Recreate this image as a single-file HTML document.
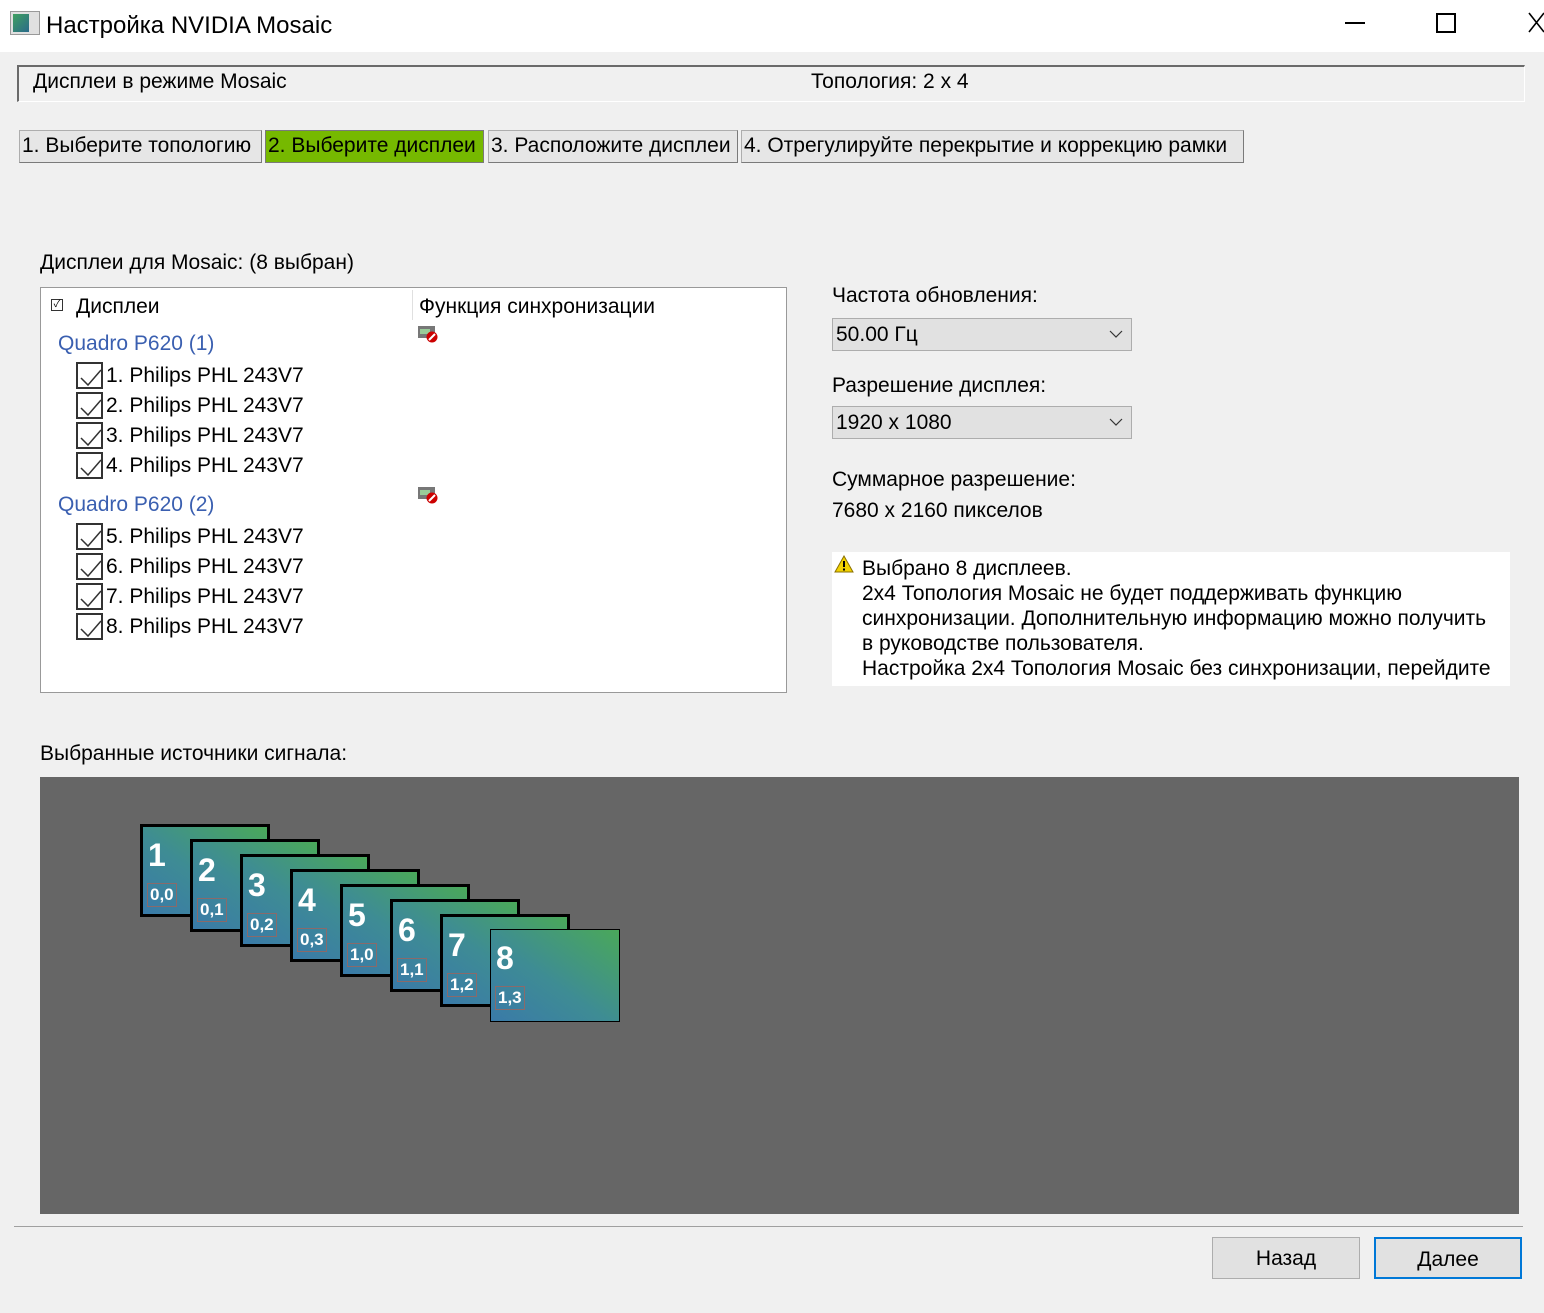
<!DOCTYPE html>
<html><head><meta charset="utf-8"><style>
*{margin:0;padding:0;box-sizing:border-box}
body{width:1544px;height:1313px;background:#f0f0f0;font-family:"Liberation Sans","Noto Sans CJK SC",sans-serif;font-size:21px;color:#000;position:relative;overflow:hidden}
.a{position:absolute;white-space:nowrap}
.tab{position:absolute;top:130px;height:33px;border:1px solid #adadad;border-bottom-color:#7a7a7a;border-right-color:#7a7a7a;background:#e6e6e6;padding:3px 0 0 2px;white-space:nowrap}
.cb{position:absolute;width:27px;height:27px;border:2px solid #333;background:#fff}
.cb svg{position:absolute;left:2px;top:3px}
.tile{position:absolute;width:130px;height:93px;border:3px solid #000;background:linear-gradient(35deg,#3a7aa8 0%,#3e8c94 45%,#4aa85a 100%);color:#fff;font-weight:bold}
.tile .n{position:absolute;left:5px;top:10px;font-size:32px}
.tile .c{position:absolute;left:4px;top:56px;font-size:17px;border:1px solid #8a6a6a;padding:1px 2px}
.sel{position:absolute;left:832px;width:300px;height:33px;background:#e1e1e1;border:1px solid #adadad;padding:4px 0 0 3px}
.sel svg{position:absolute;right:8px;top:11px}
.btn{position:absolute;top:1237px;width:148px;height:42px;background:#e1e1e1;border:1px solid #adadad;text-align:center;padding-top:9px}
</style></head><body>
<div class="a" style="left:0;top:0;width:1544px;height:52px;background:#fff"></div>
<div class="a" style="left:10px;top:11px;width:30px;height:24px;background:#e0e0e0;border:1px solid #999"><div style="position:absolute;left:2px;top:2px;width:16px;height:18px;background:linear-gradient(135deg,#3fa060,#2a6a8a)"></div></div>
<div class="a" style="left:46px;top:12px;font-size:24px">Настройка NVIDIA Mosaic</div>
<div class="a" style="left:1345px;top:22px;width:20px;height:2px;background:#000"></div>
<div class="a" style="left:1436px;top:13px;width:20px;height:20px;border:2px solid #000"></div>
<svg class="a" style="left:1528px;top:12px" width="16" height="22"><path d="M1 1L16 20M16 1L1 20" stroke="#000" stroke-width="1.6"/></svg>

<div class="a" style="left:17px;top:65px;width:1508px;height:37px;border:1px solid #fff;border-top:2px solid #6a6a6a;border-left:2px solid #6a6a6a;background:#f0f0f0"></div>
<div class="a" style="left:33px;top:70px">Дисплеи в режиме Mosaic</div>
<div class="a" style="left:811px;top:70px">Топология: 2 x 4</div>

<div class="tab" style="left:19px;width:243px">1. Выберите топологию</div>
<div class="tab" style="left:265px;width:219px;background:#76b900;border-color:#7a7a7a">2. Выберите дисплеи</div>
<div class="tab" style="left:488px;width:250px">3. Расположите дисплеи</div>
<div class="tab" style="left:741px;width:503px">4. Отрегулируйте перекрытие и коррекцию рамки</div>

<div class="a" style="left:40px;top:251px">Дисплеи для Mosaic: (8 выбран)</div>
<div class="a" style="left:40px;top:287px;width:747px;height:406px;background:#fff;border:1px solid #999"></div>
<div class="a" style="left:51px;top:299px;width:12px;height:12px;border:1px solid #333;font-size:10px;line-height:10px;text-align:center">✓</div>
<div class="a" style="left:76px;top:295px">Дисплеи</div>
<div class="a" style="left:412px;top:290px;width:1px;height:30px;background:#e0e0e0"></div>
<div class="a" style="left:419px;top:295px">Функция синхронизации</div>
<div class="a" style="left:58px;top:332px;color:#3a5fb0">Quadro P620 (1)</div>
<div class="a" style="left:58px;top:493px;color:#3a5fb0">Quadro P620 (2)</div>
<svg class="a" style="left:418px;top:325px" width="22" height="18"><rect x="0" y="1" width="17" height="12" fill="#777"/><rect x="2" y="4" width="10" height="5" fill="#9c9"/><circle cx="14" cy="12" r="5.5" fill="#c00"/><path d="M11 15L17 9" stroke="#fff" stroke-width="2"/></svg>
<svg class="a" style="left:418px;top:486px" width="22" height="18"><rect x="0" y="1" width="17" height="12" fill="#777"/><rect x="2" y="4" width="10" height="5" fill="#9c9"/><circle cx="14" cy="12" r="5.5" fill="#c00"/><path d="M11 15L17 9" stroke="#fff" stroke-width="2"/></svg>

<div class="cb" style="left:76px;top:362px"><svg width="22" height="20"><path d="M1 11L8 18L21 3" stroke="#333" fill="none" stroke-width="1.5"/></svg></div>
<div class="a" style="left:106px;top:364px">1. Philips PHL 243V7</div>
<div class="cb" style="left:76px;top:392px"><svg width="22" height="20"><path d="M1 11L8 18L21 3" stroke="#333" fill="none" stroke-width="1.5"/></svg></div>
<div class="a" style="left:106px;top:394px">2. Philips PHL 243V7</div>
<div class="cb" style="left:76px;top:422px"><svg width="22" height="20"><path d="M1 11L8 18L21 3" stroke="#333" fill="none" stroke-width="1.5"/></svg></div>
<div class="a" style="left:106px;top:424px">3. Philips PHL 243V7</div>
<div class="cb" style="left:76px;top:452px"><svg width="22" height="20"><path d="M1 11L8 18L21 3" stroke="#333" fill="none" stroke-width="1.5"/></svg></div>
<div class="a" style="left:106px;top:454px">4. Philips PHL 243V7</div>
<div class="cb" style="left:76px;top:523px"><svg width="22" height="20"><path d="M1 11L8 18L21 3" stroke="#333" fill="none" stroke-width="1.5"/></svg></div>
<div class="a" style="left:106px;top:525px">5. Philips PHL 243V7</div>
<div class="cb" style="left:76px;top:553px"><svg width="22" height="20"><path d="M1 11L8 18L21 3" stroke="#333" fill="none" stroke-width="1.5"/></svg></div>
<div class="a" style="left:106px;top:555px">6. Philips PHL 243V7</div>
<div class="cb" style="left:76px;top:583px"><svg width="22" height="20"><path d="M1 11L8 18L21 3" stroke="#333" fill="none" stroke-width="1.5"/></svg></div>
<div class="a" style="left:106px;top:585px">7. Philips PHL 243V7</div>
<div class="cb" style="left:76px;top:613px"><svg width="22" height="20"><path d="M1 11L8 18L21 3" stroke="#333" fill="none" stroke-width="1.5"/></svg></div>
<div class="a" style="left:106px;top:615px">8. Philips PHL 243V7</div>

<div class="a" style="left:832px;top:284px">Частота обновления:</div>
<div class="sel" style="top:318px">50.00 Гц<svg width="14" height="9"><path d="M1 1L7 7L13 1" stroke="#333" fill="none" stroke-width="1.2"/></svg></div>
<div class="a" style="left:832px;top:374px">Разрешение дисплея:</div>
<div class="sel" style="top:406px">1920 x 1080<svg width="14" height="9"><path d="M1 1L7 7L13 1" stroke="#333" fill="none" stroke-width="1.2"/></svg></div>
<div class="a" style="left:832px;top:468px">Суммарное разрешение:</div>
<div class="a" style="left:832px;top:499px">7680 x 2160 пикселов</div>

<div class="a" style="left:832px;top:552px;width:678px;height:134px;background:#fff"></div>
<svg class="a" style="left:834px;top:555px" width="20" height="18"><path d="M10 1L19 17H1Z" fill="#f2d200" stroke="#8a7000"/><rect x="9" y="6" width="2" height="6" fill="#000"/><rect x="9" y="13.5" width="2" height="2" fill="#000"/></svg>
<div class="a" style="left:862px;top:556px;line-height:25px">Выбрано 8 дисплеев.<br>2x4 Топология Mosaic не будет поддерживать функцию<br>синхронизации. Дополнительную информацию можно получить<br>в руководстве пользователя.<br>Настройка 2x4 Топология Mosaic без синхронизации, перейдите</div>

<div class="a" style="left:40px;top:742px">Выбранные источники сигнала:</div>
<div class="a" style="left:40px;top:777px;width:1479px;height:437px;background:#666"></div>
<div class="tile" style="left:140px;top:824px"><span class="n">1</span><span class="c">0,0</span></div>
<div class="tile" style="left:190px;top:839px"><span class="n">2</span><span class="c">0,1</span></div>
<div class="tile" style="left:240px;top:854px"><span class="n">3</span><span class="c">0,2</span></div>
<div class="tile" style="left:290px;top:869px"><span class="n">4</span><span class="c">0,3</span></div>
<div class="tile" style="left:340px;top:884px"><span class="n">5</span><span class="c">1,0</span></div>
<div class="tile" style="left:390px;top:899px"><span class="n">6</span><span class="c">1,1</span></div>
<div class="tile" style="left:440px;top:914px"><span class="n">7</span><span class="c">1,2</span></div>
<div class="tile" style="left:490px;top:929px;border-width:1px"><span class="n">8</span><span class="c">1,3</span></div>

<div class="a" style="left:14px;top:1226px;width:1509px;height:1px;background:#a0a0a0"></div>
<div class="btn" style="left:1212px">Назад</div>
<div class="btn" style="left:1374px;border:2px solid #0078d7">Далее</div>
</body></html>
